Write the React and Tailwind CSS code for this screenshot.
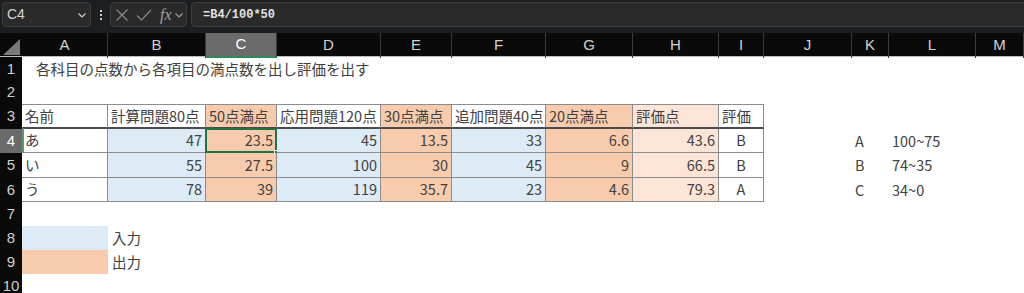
import React from "react";

const GRID =
  "grid grid-cols-[22px_86px_98px_71px_104px_71px_94px_87px_86px_45px_88px_37px_87px_1fr]";

const letters = ["A", "B", "C", "D", "E", "F", "G", "H", "I", "J", "K", "L", "M"];

const FILL = {
  w: "bg-white",
  b: "bg-[#ddebf7]",
  o: "bg-[#f8cbad]",
  p: "bg-[#fce4d6]",
};

const headerRow = [
  { t: "名前", f: "w" },
  { t: "計算問題80点", f: "w" },
  { t: "50点満点", f: "o" },
  { t: "応用問題120点", f: "w" },
  { t: "30点満点", f: "o" },
  { t: "追加問題40点", f: "w" },
  { t: "20点満点", f: "o" },
  { t: "評価点", f: "p" },
  { t: "評価", f: "w" },
];

const rows = [
  { name: "あ", v: [47, 23.5, 45, 13.5, 33, 6.6, 43.6], grade: "B" },
  { name: "い", v: [55, 27.5, 100, 30, 45, 9, 66.5], grade: "B" },
  { name: "う", v: [78, 39, 119, 35.7, 23, 4.6, 79.3], grade: "A" },
];
const dataFills = ["b", "o", "b", "o", "b", "o", "p"];

const legend = [
  ["A", "100~75"],
  ["B", "74~35"],
  ["C", "34~0"],
];

const font = "font-['Noto_Sans_CJK_JP',sans-serif] text-[14.5px] text-[#404040] leading-none";

function RowHead({ n, active }) {
  return (
    <div
      className={`flex items-center justify-center font-['Liberation_Sans',sans-serif] text-[15px] ${
        active ? "bg-[#6b6b6b] text-white" : "bg-[#0a0a0a] text-[#cfcfcf]"
      }`}
    >
      {n}
    </div>
  );
}

function Chevron({ className }) {
  return (
    <svg width="10" height="10" viewBox="0 0 10 10" className={className}>
      <path d="M1.5 3.5 L5 7 L8.5 3.5" fill="none" stroke="currentColor" strokeWidth="1.2" />
    </svg>
  );
}

export default function App() {
  return (
    <div className="w-[1024px] h-[293px] overflow-hidden bg-white">
      {/* formula bar */}
      <div className="h-[33px] bg-[#1c1f21] flex items-start pt-[2px] pl-[2px]">
        <div className="w-[89px] h-[25px] rounded-[4px] border border-[#3e3e3e] bg-[#2a2a2a] flex items-center justify-between pl-[4px] pr-[3px] font-['Liberation_Sans',sans-serif] text-[14px] text-[#d4d4d4]">
          <span>C4</span>
          <Chevron className="text-[#cfcfcf]" />
        </div>
        <div className="w-[19px] h-[25px] flex flex-col items-center justify-center gap-[2px]">
          <span className="w-[2px] h-[2px] bg-[#cfcfcf]" />
          <span className="w-[2px] h-[2px] bg-[#cfcfcf]" />
          <span className="w-[2px] h-[2px] bg-[#cfcfcf]" />
        </div>
        <div className="w-[77px] h-[25px] rounded-[4px] border border-[#3e3e3e] bg-[#2a2a2a] flex items-center pl-[4px] text-[#8a8a8a]">
          <svg width="14" height="14" viewBox="0 0 14 14">
            <path d="M1.5 1.5 L12.5 12.5 M12.5 1.5 L1.5 12.5" stroke="currentColor" strokeWidth="1.2" fill="none" />
          </svg>
          <svg width="16" height="14" viewBox="0 0 16 14" className="ml-[7px]">
            <path d="M1 7.5 L5.5 12 L15 2" stroke="currentColor" strokeWidth="1.2" fill="none" />
          </svg>
          <span className="ml-[8px] font-['Liberation_Serif',serif] italic text-[16px] leading-none text-[#a0a0a0]">fx</span>
          <Chevron className="ml-[2px] text-[#a0a0a0]" />
        </div>
        <div className="ml-[4px] flex-1 -mr-[8px] h-[25px] rounded-[4px] border border-[#3e3e3e] bg-[#2a2a2a] flex items-center pl-[11px] font-['Liberation_Mono',monospace] text-[12px] font-bold text-[#e2e2e2]">
          =B4/100*50
        </div>
      </div>

      {/* column headers */}
      <div className={`${GRID} h-[24px] bg-[#0a0a0a] border-b border-[#bdbdbd] font-['Liberation_Sans',sans-serif] text-[15px]`}>
        <div className="flex items-end justify-end pr-[2px] pb-[3px]">
          <svg width="17" height="16" viewBox="0 0 17 16">
            <path d="M0 16 L17 16 L17 0 Z" fill="#7a7a7a" />
          </svg>
        </div>
        {letters.map((l) => (
          <div
            key={l}
            className={`flex items-center justify-center border-r border-[#3a3a3a] ${
              l === "C" ? "bg-[#6b6b6b] text-white border-b-2 border-b-[#2e8b57]" : "text-[#d2d2d2]"
            }`}
          >
            {l}
          </div>
        ))}
      </div>

      {/* row 1 */}
      <div className={`${GRID} h-[24px]`}>
        <RowHead n={1} />
        <div className={`col-span-13 flex items-center pl-[14px] ${font}`}>
          各科目の点数から各項目の満点数を出し評価を出す
        </div>
      </div>

      {/* row 2 */}
      <div className={`${GRID} h-[23px]`}>
        <RowHead n={2} />
      </div>

      {/* row 3 */}
      <div className={`${GRID} h-[25px]`}>
        <RowHead n={3} />
        {headerRow.map((c, i) => (
          <div
            key={i}
            className={`flex items-center pl-[3px] border-t border-r border-[#8c8c8c] border-b-2 border-b-[#4a4a4a] ${FILL[c.f]} ${font}`}
          >
            {c.t}
          </div>
        ))}
      </div>

      {/* rows 4-6 */}
      {rows.map((r, ri) => (
        <div key={ri} className={`${GRID} ${ri === 1 ? "h-[25px]" : "h-[24px]"}`}>
          <RowHead n={ri + 4} active={ri === 0} />
          <div className={`relative flex items-center pl-[3px] border-r border-b border-[#8c8c8c] bg-white ${font}`}>
            {r.name}
            {ri === 0 && <span className="absolute left-0 top-[-1px] bottom-[-1px] w-[2px] bg-[#5a9a6e]" />}
          </div>
          {r.v.map((v, vi) => (
            <div
              key={vi}
              className={`relative flex items-center justify-end pr-[3px] border-r border-b border-[#8c8c8c] ${FILL[dataFills[vi]]} ${font}`}
            >
              {v}
              {ri === 0 && vi === 1 && (
                <>
                  <span className="absolute -left-px -top-px -right-px -bottom-px border-2 border-[#217346]" />
                  <span className="absolute -right-[3px] -bottom-[3px] w-[5px] h-[5px] bg-[#217346] border border-white" />
                </>
              )}
            </div>
          ))}
          <div className={`flex items-center justify-center border-r border-b border-[#8c8c8c] bg-white ${font}`}>
            {r.grade}
          </div>
          <div />
          <div className={`flex items-center pl-[3px] ${font}`}>{legend[ri][0]}</div>
          <div className={`flex items-center pl-[3px] ${font}`}>{legend[ri][1]}</div>
        </div>
      ))}

      {/* row 7 */}
      <div className={`${GRID} h-[24px]`}>
        <RowHead n={7} />
      </div>

      {/* row 8 */}
      <div className={`${GRID} h-[24px]`}>
        <RowHead n={8} />
        <div className="bg-[#ddebf7]" />
        <div className={`flex items-center pl-[4px] ${font}`}>入力</div>
      </div>

      {/* row 9 */}
      <div className={`${GRID} h-[24px]`}>
        <RowHead n={9} />
        <div className="bg-[#f8cbad]" />
        <div className={`flex items-center pl-[4px] ${font}`}>出力</div>
      </div>

      {/* row 10 */}
      <div className={`${GRID} h-[24px]`}>
        <RowHead n={10} />
      </div>
    </div>
  );
}
